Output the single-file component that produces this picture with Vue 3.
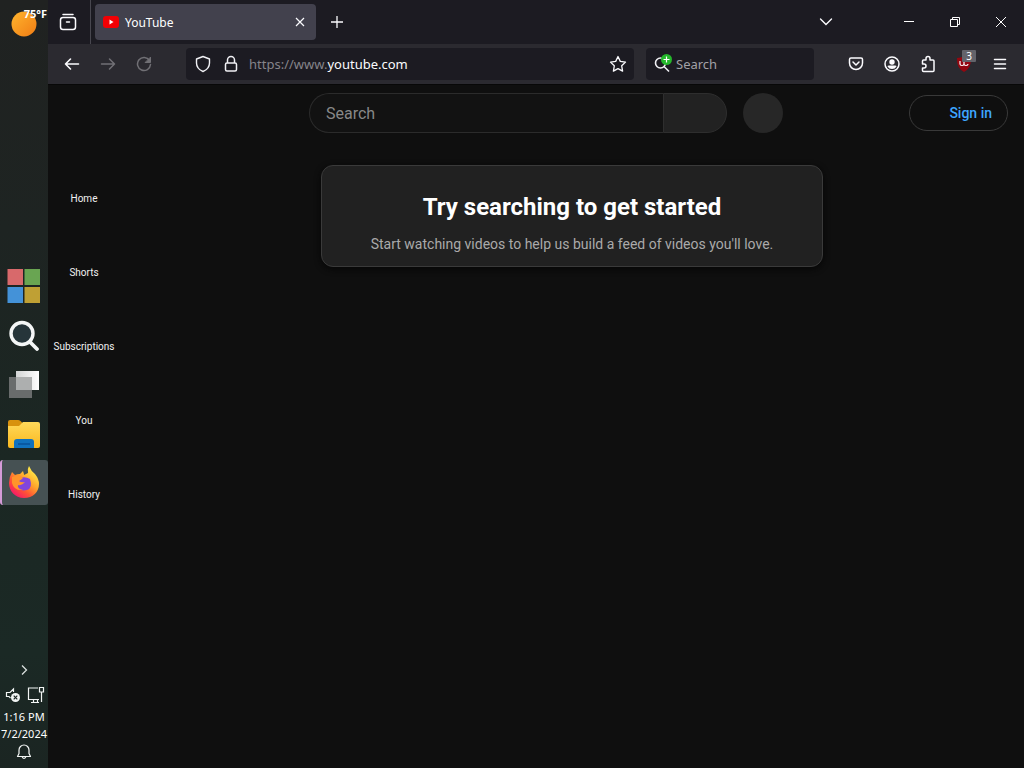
<script setup>
const guide = ['Home', 'Shorts', 'Subscriptions', 'You', 'History']
</script>

<template>
  <div class="desktop">
    <aside class="taskbar">
      <button class="weather" aria-label="Weather">
        <svg width="28" height="28" viewBox="0 0 28 28">
          <defs>
            <linearGradient id="sun" x1="0" y1="0" x2="1" y2="1">
              <stop offset="0" stop-color="#ffb52e" />
              <stop offset="1" stop-color="#f07c14" />
            </linearGradient>
          </defs>
          <circle cx="14" cy="14" r="12.500" fill="url(#sun)" />
        </svg>
        <span class="temp">75°F</span>
      </button>

      <nav class="apps">
        <button class="app" aria-label="Start">
          <svg width="34" height="36" viewBox="0 0 34 36">
            <rect x="0.5" y="1" width="15.5" height="16" fill="#d8696b" />
            <rect x="17.5" y="1" width="15.5" height="16" fill="#69a552" />
            <rect x="0.5" y="19" width="15.5" height="16" fill="#4492d8" />
            <rect x="17.5" y="19" width="15.5" height="16" fill="#bfa034" />
          </svg>
        </button>
        <button class="app" aria-label="Search Windows">
          <svg width="32" height="32" viewBox="0 0 32 32" fill="none" stroke="#f4f6f6">
            <circle cx="14" cy="14.500" r="11" stroke-width="3.400" fill="#26353a" />
            <path d="M22 23l7 7" stroke-width="3.800" stroke-linecap="round" />
          </svg>
        </button>
        <button class="app" aria-label="Task view">
          <svg width="32" height="30" viewBox="0 0 32 30">
            <defs>
              <linearGradient id="pane" x1="0" y1="0" x2="1" y2="0">
                <stop offset="0" stop-color="#d2d4d4" />
                <stop offset="1" stop-color="#ffffff" />
              </linearGradient>
            </defs>
            <rect x="1" y="8" width="23" height="21" fill="#696c6c" />
            <rect x="8" y="2" width="23" height="19" fill="url(#pane)" />
            <rect x="8" y="8" width="16" height="13" fill="#adafaf" />
          </svg>
        </button>
        <button class="app" aria-label="File Explorer">
          <svg width="34" height="32" viewBox="0 0 34 32">
            <defs>
              <linearGradient id="folder" x1="0" y1="0" x2="0" y2="1">
                <stop offset="0" stop-color="#ffd95a" />
                <stop offset="1" stop-color="#fab81e" />
              </linearGradient>
            </defs>
            <path d="M1 5q0-2 2-2h8q1.500 0 2.500 1l2 2v5H1z" fill="#d8920e" />
            <path d="M1 9h11l4-4h15q2 0 2 2v22q0 2-2 2H3q-2 0-2-2z" fill="url(#folder)" />
            <path d="M7 31v-6q0-3 3-3h14q3 0 3 3v6z" fill="#1071bd" />
            <path d="M11 27h12" stroke="#07529a" stroke-width="1.500" />
          </svg>
        </button>
        <button class="app active" aria-label="Firefox">
          <svg width="34" height="34" viewBox="0 0 34 34">
            <defs>
              <linearGradient id="fox" x1="0.85" y1="0.1" x2="0.2" y2="0.95">
                <stop offset="0" stop-color="#fff04a" />
                <stop offset="0.4" stop-color="#ffa52b" />
                <stop offset="0.7" stop-color="#ff5335" />
                <stop offset="1" stop-color="#f5156c" />
              </linearGradient>
            </defs>
            <path d="M5 7l3 3q2-1 5-1l3-3q1 3 1 4l4-2q-1-4 1-7 2 5 6 8 4 5 4 10c0 8-6 14-15 14S2 26 2 18q0-6 3-11z" fill="url(#fox)" />
            <path d="M13 13q5-2 10 1 3 9-3 11-8 2-10-5l5-1q-3-2-5-2 0-3 3-4z" fill="#8145dc" />
            <path d="M5 12l6-2q3 0 5 3-2 2-4 3 2 2 6 1-3 4-7 3-1 4 5 5-9 1-11-7z" fill="#ff942b" />
          </svg>
        </button>
      </nav>

      <div class="tray">
        <button class="more" aria-label="Show hidden icons">
          <svg width="12" height="12" viewBox="0 0 12 12" fill="none" stroke="#d8dedd" stroke-width="1.300"><path d="M4 1.500L8.500 6 4 10.500" /></svg>
        </button>
        <div class="status">
          <svg width="16" height="18" viewBox="0 0 16 18" fill="none" stroke="#f2f5f4" stroke-width="1.200">
            <path d="M8.500 6V3L5 6.500H1.500v4H4l1.500 1.500" />
            <circle cx="10.500" cy="11.500" r="4.500" fill="#f2f5f4" stroke="none" />
            <path d="M8.700 9.700l3.600 3.600m0-3.600l-3.600 3.600" stroke="#1b2522" />
          </svg>
          <svg width="18" height="18" viewBox="0 0 18 18" fill="none" stroke="#f2f5f4" stroke-width="1.200">
            <path d="M11 2H1.500v11.500H12M4 16.500h8M6.500 13.500v3M10.500 13.500v3" />
            <path d="M12.500 1.500h4v4.500h-4zM14.500 6v10" />
          </svg>
        </div>
        <time>1:16 PM</time>
        <time>7/2/2024</time>
        <button class="bell" aria-label="Notifications">
          <svg width="16" height="18" viewBox="0 0 16 18" fill="none" stroke="#f2f5f4" stroke-width="1.200" stroke-linejoin="round">
            <path d="M1.500 13.500h13L13 10.500V7A5 5 0 0 0 3 7v3.500zM6 13.500q2 4 4 0" />
          </svg>
        </button>
      </div>
    </aside>

    <div class="browser">
      <div class="tabs">
        <button class="tool" aria-label="Recent browsing">
          <svg width="18" height="18" viewBox="0 0 18 18" fill="none" stroke="#fbfbfe" stroke-width="1.500" stroke-linecap="round">
            <path d="M4 1.500h10" /><rect x="1.500" y="4.500" width="15" height="12" rx="2.500" /><path d="M7.500 9h3" />
          </svg>
        </button>
        <span class="divider"></span>
        <div class="tab">
          <svg width="16" height="12" viewBox="0 0 16 12"><rect width="16" height="12" rx="3" fill="#f20004" /><path d="M6.500 3.500v5l4-2.500z" fill="#fff" /></svg>
          <span class="title">YouTube</span>
          <button class="close" aria-label="Close tab">
            <svg width="10" height="10" viewBox="0 0 10 10" stroke="#fbfbfe" stroke-width="1.200"><path d="M1 1l8 8M9 1L1 9" /></svg>
          </button>
        </div>
        <button class="tool newtab" aria-label="New tab">
          <svg width="12" height="12" viewBox="0 0 12 12" stroke="#fbfbfe" stroke-width="1.300"><path d="M6 0v12M0 6h12" /></svg>
        </button>
        <button class="tool all" aria-label="List all tabs">
          <svg width="14" height="10" viewBox="0 0 14 10" fill="none" stroke="#fbfbfe" stroke-width="1.400" stroke-linecap="round"><path d="M1.500 2L7 7.500 12.500 2" /></svg>
        </button>
        <div class="window">
          <button aria-label="Minimize"><svg width="10" height="10" viewBox="0 0 10 10" stroke="#fff"><path d="M0 4.500h10" /></svg></button>
          <button aria-label="Restore"><svg width="10" height="10" viewBox="0 0 10 10" fill="none" stroke="#fff"><path d="M.5 2.500h7v7h-7zM2.500 2V.5h7v7H8" /></svg></button>
          <button aria-label="Close"><svg width="12" height="12" viewBox="0 0 12 12" stroke="#fff"><path d="M1 1l10 10M11 1L1 11" /></svg></button>
        </div>
      </div>

      <div class="toolbar">
        <button class="tool" aria-label="Back">
          <svg width="16" height="16" viewBox="0 0 16 16" fill="none" stroke="#fbfbfe" stroke-width="1.600" stroke-linecap="round" stroke-linejoin="round"><path d="M14.500 8H1.500M6.500 3L1.500 8l5 5" /></svg>
        </button>
        <button class="tool" aria-label="Forward">
          <svg width="16" height="16" viewBox="0 0 16 16" fill="none" stroke="#717075" stroke-width="1.500" stroke-linecap="round" stroke-linejoin="round"><path d="M1.500 8h13M9.500 3l5 5-5 5" /></svg>
        </button>
        <button class="tool" aria-label="Reload">
          <svg width="16" height="16" viewBox="0 0 16 16" fill="none" stroke="#717075" stroke-width="1.500" stroke-linecap="round" stroke-linejoin="round"><path d="M13.500 4.500A6.500 6.500 0 1 0 14.500 8.500" /><path d="M14.500 1.500v5h-5z" fill="#717075" stroke-width="1" /></svg>
        </button>
        <div class="urlbar">
          <svg width="16" height="18" viewBox="0 0 16 18" fill="none" stroke="#f0f0f4" stroke-width="1.400" stroke-linejoin="round"><path d="M8 1.500l6.500 2.500v4c0 4-3 7-6.500 8.500C4.500 15 1.500 12 1.500 8V4z" /></svg>
          <svg class="lock" width="14" height="18" viewBox="0 0 14 18" fill="none" stroke="#f0f0f4" stroke-width="1.500"><rect x="1.500" y="8" width="11" height="8" rx="1.500" /><path d="M3.500 8V5a3.500 3.500 0 0 1 7 0v3" /></svg>
          <a class="url" href="#"><span>https://www.</span>youtube.com</a>
          <button class="star" aria-label="Bookmark this page">
            <svg width="18" height="18" viewBox="0 0 18 18" fill="none" stroke="#fbfbfe" stroke-width="1.300" stroke-linejoin="round"><path d="M9 1.500l2.300 4.900 5.200.7-3.800 3.700.9 5.300L9 13.600l-4.600 2.500.9-5.300L1.500 7.100l5.200-.7z" /></svg>
          </button>
        </div>
        <label class="find">
          <svg width="20" height="20" viewBox="0 0 20 20" fill="none" stroke="#f0f0f4" stroke-width="1.600">
            <circle cx="6.500" cy="9" r="5" /><path d="M10 12.500l5 5" />
            <circle cx="12.500" cy="5.500" r="5.500" fill="#24b72b" stroke="none" /><path d="M12.500 2.500v6M9.500 5.500h6" stroke="#fff" stroke-width="1.200" />
          </svg>
          <input type="text" placeholder="Search" aria-label="Search the web" />
        </label>
        <div class="actions">
          <button class="tool" aria-label="Pocket">
            <svg width="16" height="16" viewBox="0 0 16 16" fill="none" stroke="#fbfbfe" stroke-width="1.500" stroke-linecap="round" stroke-linejoin="round"><path d="M3 2h10q1.500 0 1.500 1.500V7a6.500 6.500 0 0 1-13 0V3.500Q1.500 2 3 2zM5 6l3 3 3-3" /></svg>
          </button>
          <button class="tool" aria-label="Account">
            <svg width="16" height="16" viewBox="0 0 16 16"><circle cx="8" cy="8" r="7" fill="none" stroke="#fbfbfe" stroke-width="1.500" /><circle cx="8" cy="6" r="2.700" fill="#fbfbfe" /><path d="M3.500 10.500q0-1 1.500-1h6q1.500 0 1.500 1Q11 13 8 13t-4.500-2.500z" fill="#fbfbfe" /></svg>
          </button>
          <button class="tool" aria-label="Extensions">
            <svg width="16" height="18" viewBox="0 0 16 18" fill="none" stroke="#fbfbfe" stroke-width="1.500" stroke-linejoin="round"><path d="M2.500 9V6q0-1 1-1H6V3.500a2 2 0 0 1 4 0V5h3q1 0 1 1v9.500q0 1-1 1H3.500q-1 0-1-1V13H4a2 2 0 0 0 0-4z" /></svg>
          </button>
          <button class="tool blocker" aria-label="uBlock Origin">
            <svg width="16" height="16" viewBox="0 0 16 16"><path d="M8 0q3 2 7 2 .5 10-7 14Q.5 12 1 2q4 0 7-2z" fill="#940710" /><path d="M4 5v3q0 1.500 2 1.500t2-1.500V6v2q0 1.500 2 1.500T12 8" fill="none" stroke="#fff" stroke-width="1.200" /></svg>
            <span class="count">3</span>
          </button>
          <button class="tool" aria-label="Menu">
            <svg width="14" height="14" viewBox="0 0 14 14" stroke="#fbfbfe" stroke-width="1.500" stroke-linecap="round"><path d="M1.500 2.500h11M1.500 7h11M1.500 11.500h11" /></svg>
          </button>
        </div>
      </div>

      <div class="page">
        <header class="masthead">
          <form class="search" @submit.prevent>
            <input type="search" placeholder="Search" aria-label="Search videos" />
            <button class="go" aria-label="Submit search"></button>
            <button type="button" class="voice" aria-label="Search with your voice"></button>
          </form>
          <div class="account"><a class="signin" href="#">Sign in</a></div>
        </header>
        <div class="body">
          <nav class="guide">
            <a v-for="item in guide" :key="item" href="#">{{ item }}</a>
          </nav>
          <main>
            <section class="card">
              <h1>Try searching to get started</h1>
              <p>Start watching videos to help us build a feed of videos you'll love.</p>
            </section>
          </main>
        </div>
      </div>
    </div>
  </div>
</template>

<style>
body {
  margin: 0;
  background: #0f0f0f;
}
</style>

<style scoped>
* {
  box-sizing: border-box;
}
button {
  display: flex;
  align-items: center;
  justify-content: center;
  padding: 0;
  border: 0;
  background: none;
  color: inherit;
  font: inherit;
}
a {
  color: inherit;
  text-decoration: none;
}
svg {
  display: block;
  flex: none;
}
.desktop {
  display: flex;
  min-height: 100vh;
  color: #fff;
  font-family: "Noto Sans", sans-serif;
}
.taskbar {
  display: grid;
  flex: none;
  grid-template-rows: 1fr auto 1fr;
  width: 48px;
  background: linear-gradient(#202221, #1e2422 30%, #1b2723 60%, #1b2925 85%, #1b2522);
}
.weather {
  position: relative;
  width: 48px;
  height: 48px;
}
.temp {
  position: absolute;
  top: 6px;
  right: 1px;
  font-size: 11px;
  font-weight: 700;
  line-height: 16px;
}
.apps {
  display: flex;
  flex-direction: column;
  gap: 4px;
}
.app {
  width: 48px;
  height: 45px;
}
.active {
  padding-right: 2px;
  border-left: 2px solid #d59bd8;
  border-radius: 3px;
  background: #465153;
}
.tray {
  display: flex;
  flex-direction: column;
  align-items: center;
  align-self: end;
  padding-bottom: 6px;
  font-size: 11px;
  line-height: 17px;
}
.more {
  width: 48px;
  height: 24px;
}
.status {
  display: flex;
  align-items: center;
  gap: 6px;
  height: 26px;
  padding-left: 1px;
}
.bell {
  width: 48px;
  height: 20px;
}
.browser {
  display: flex;
  flex: 1;
  flex-direction: column;
  min-width: 0;
}
.tabs {
  display: flex;
  align-items: center;
  height: 44px;
  padding-left: 2px;
  background: #1c1b22;
}
.tool {
  position: relative;
  flex: none;
  width: 36px;
  height: 36px;
}
.divider {
  align-self: stretch;
  width: 1px;
  margin: 0 4px;
  background: #48474f;
}
.tab {
  display: flex;
  flex: 0 1 221px;
  align-items: center;
  height: 36px;
  padding: 0 6px 0 8px;
  border-radius: 4px;
  background: #42414d;
}
.title {
  flex: 1;
  margin-left: 6px;
  font-size: 12px;
}
.close {
  width: 20px;
  height: 20px;
}
.newtab {
  margin-left: 3px;
}
.all {
  margin-left: auto;
}
.window {
  display: flex;
  align-self: stretch;
  margin-left: 42px;
}
.window button {
  width: 46px;
}
.toolbar {
  display: flex;
  align-items: center;
  height: 40px;
  padding: 0 6px;
  background: #2b2a30;
}
.urlbar,
.find {
  display: flex;
  align-items: center;
  height: 32px;
  border-radius: 4px;
  background: #1c1b22;
}
.urlbar {
  flex: 1;
  margin-left: 24px;
  padding: 0 6px 0 9px;
}
.lock {
  margin-left: 13px;
}
.url {
  flex: 1;
  margin-left: 11px;
  font-size: 13px;
  color: #fbfbfe;
}
.url span {
  color: #85848a;
}
.star {
  width: 20px;
  height: 32px;
}
.find {
  flex: none;
  width: 168px;
  margin-left: 12px;
  padding-left: 8px;
}
.find input {
  flex: 1;
  min-width: 0;
  margin-left: 2px;
  padding: 0;
  border: 0;
  outline: 0;
  background: none;
  color: #fbfbfe;
  font: 13px "Noto Sans", sans-serif;
}
.find input::placeholder {
  color: #a2a1a7;
  opacity: 1;
}
.actions {
  display: flex;
  margin-left: 24px;
}
.count {
  position: absolute;
  top: 4px;
  right: 6px;
  width: 14px;
  border-radius: 1px;
  background: #63636a;
  font-size: 10px;
  line-height: 12px;
  text-align: center;
}
.page {
  flex: 1;
  border-top: 1px solid #080808;
  background: #0f0f0f;
  font-family: Roboto, sans-serif;
}
.masthead {
  display: flex;
  align-items: center;
  height: 56px;
  padding: 0 16px 0 185px;
}
.search {
  display: flex;
  flex: 1;
  max-width: 732px;
  min-width: 0;
  margin: 0 auto;
  padding-left: 76px;
}
.search input {
  flex: 1;
  min-width: 0;
  height: 40px;
  padding: 0 16px;
  border: 1px solid #2b2b2b;
  border-right: 0;
  border-radius: 20px 0 0 20px;
  outline: 0;
  background: #121212;
  color: #f1f1f1;
  font: 16px Roboto, sans-serif;
}
.search input::placeholder {
  color: #888;
  opacity: 1;
}
.go {
  width: 64px;
  height: 40px;
  border: 1px solid #2e2e2e;
  border-radius: 0 20px 20px 0;
  background: #222;
}
.voice {
  width: 40px;
  height: 40px;
  margin-left: 16px;
  border-radius: 50%;
  background: #272727;
}
.account {
  display: flex;
  flex: none;
  justify-content: flex-end;
  width: 225px;
}
.signin {
  height: 36px;
  padding: 0 15px 0 39px;
  border: 1px solid #393939;
  border-radius: 18px;
  color: #3ea6ff;
  font-size: 14px;
  font-weight: 500;
  line-height: 34px;
}
.body {
  display: flex;
}
.guide {
  flex: none;
  width: 72px;
  padding-top: 4px;
}
.guide a {
  display: block;
  height: 74px;
  padding-top: 47px;
  color: #f1f1f1;
  font-size: 10px;
  line-height: 14px;
  text-align: center;
}
main {
  flex: 1;
  padding: 24px;
}
.card {
  width: fit-content;
  margin: 0 auto;
  padding: 24px 49px 11px;
  border: 1px solid #3a3a3a;
  border-radius: 12px;
  background: #212121;
  box-shadow: 0 2px 6px #060606;
  text-align: center;
}
h1 {
  margin: 0 0 9px;
  font-size: 24px;
  font-weight: 700;
  line-height: 34px;
}
p {
  margin: 0;
  color: #aaa;
  font-size: 14px;
  line-height: 22px;
}
</style>
